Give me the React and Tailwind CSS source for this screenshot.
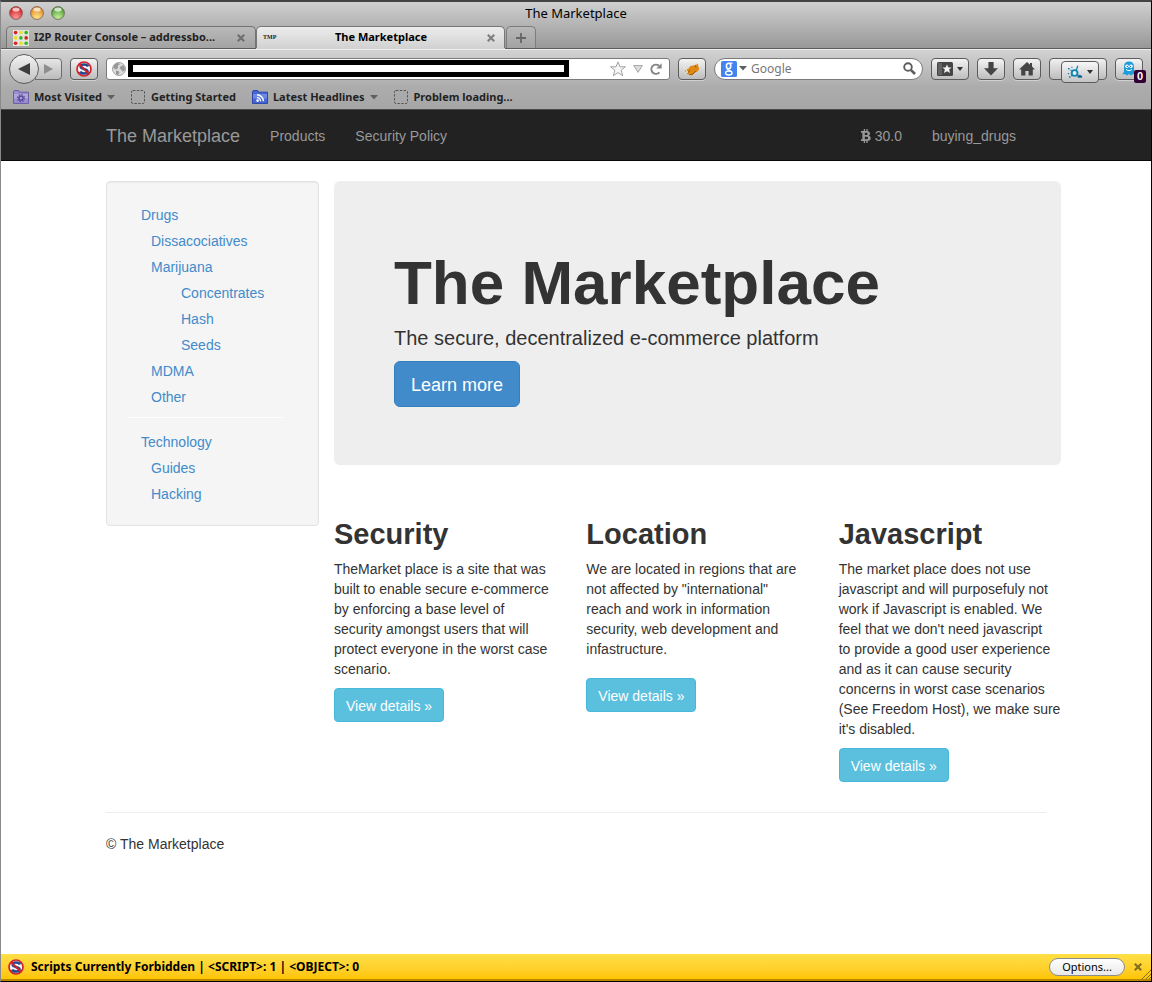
import React from "react";

const chromeFont = "font-['Noto_Sans','Open_Sans',sans-serif]";
const toolButton =
  "flex h-[22px] w-7 shrink-0 items-center justify-center rounded-[4px] border border-[#5c5c5c] bg-linear-to-b from-[#f4f4f4] to-[#bdbdbd] shadow-[0_1px_0_#d0d0d0]";

function TrafficLight({ id, label, light, dark }) {
  return (
    <button aria-label={label} className="size-[14px]">
      <svg viewBox="0 0 14 14" className="size-[14px]">
        <defs>
          <radialGradient id={id} cx="50%" cy="85%" r="75%">
            <stop offset="0" stopColor={light} />
            <stop offset="1" stopColor={dark} />
          </radialGradient>
        </defs>
        <circle cx="7" cy="7" r="6.4" fill={`url(#${id})`} stroke="#55403c" strokeOpacity=".65" strokeWidth=".9" />
        <ellipse cx="7" cy="3.6" rx="3.6" ry="2" fill="#fff" fillOpacity=".7" />
      </svg>
    </button>
  );
}

function CloseGlyph({ color = "#6f6f6f" }) {
  return (
    <svg viewBox="0 0 8 8" className="size-2">
      <path d="M.8.8l6.400 6.400M7.200.8L.8 7.200" stroke={color} strokeWidth="2.200" />
    </svg>
  );
}

function Caret({ color = "#5f5f5f", className = "" }) {
  return (
    <svg viewBox="0 0 8 5" className={`h-[5px] w-2 shrink-0 ${className}`}>
      <path d="M0 0h8L4 4.6z" fill={color} />
    </svg>
  );
}

const routerDots = [
  "#d42020", "#e8e020", "#28b828",
  "#e8e020", "#28b828", "#d42020",
  "#d42020", "#e8e020", "#28b828",
];

function RouterIcon() {
  return (
    <svg viewBox="0 0 16 16" className="size-4 shrink-0">
      <rect width="16" height="16" fill="#e4e4dc" />
      {routerDots.map((c, i) => (
        <circle key={i} cx={2.6 + (i % 3) * 5.3} cy={2.6 + Math.floor(i / 3) * 5.3} r="1.8" fill={c} />
      ))}
    </svg>
  );
}

function NoScriptIcon() {
  return (
    <svg viewBox="0 0 16 16" className="size-4 shrink-0">
      <circle cx="8" cy="8" r="7" fill="#f4f4f8" stroke="#d81f26" strokeWidth="1.7" />
      <path d="M12 5.400C11 3 4.600 2.800 4.600 5.700c0 2.700 7 1.800 7 4.700 0 2.800-6.400 2.600-7.600.2" fill="none" stroke="#24478f" strokeWidth="2.500" />
      <path d="M3.200 3.200l9.600 9.600" stroke="#d81f26" strokeWidth="1.900" />
    </svg>
  );
}

function GlobeIcon() {
  return (
    <svg viewBox="0 0 14 14" className="size-[14px] shrink-0">
      <circle cx="7" cy="7" r="6.5" fill="#dcdcdc" stroke="#a4a4a4" />
      <path d="M2 3.2C3 1.8 5 1 7 1l.6 1.6-2 1.2.6 1.8-2 1.8L1.3 6zM8.4 4.6l3-1.6 1.6 3-.6 3-2.2.4-1-2-1.6-.6zM4 8.6l2.8.6.6 1.8-1.4 2-2-.8z" fill="#989898" />
    </svg>
  );
}

function FolderIcon({ kind }) {
  const rss = kind === "rss";
  return (
    <svg viewBox="0 0 16 14" className="h-[14px] w-4 shrink-0">
      <path d="M.5 1.8L1.3.6h4.4l.9 1.6h8.9v11.2H.5z" fill={rss ? "#4468d8" : "#9a8ed0"} stroke={rss ? "#2b45a8" : "#6b5ca6"} />
      <path d="M1 4h14v4.5H1z" fill="#fff" fillOpacity=".22" />
      {rss ? (
        <g fill="none" stroke="#fff" strokeWidth="1.4">
          <path d="M5 7.6a3.6 3.6 0 0 1 3.6 3.6M5 4.8a6.4 6.4 0 0 1 6.4 6.4" />
          <circle cx="5.6" cy="10.6" r=".6" fill="#fff" />
        </g>
      ) : (
        <g fill="none" stroke="#5e4f9c">
          <circle cx="8" cy="8.2" r="2.1" strokeWidth="1.6" />
          <circle cx="8" cy="8.2" r="3.5" strokeWidth="1.3" strokeDasharray="1.4 1.35" />
        </g>
      )}
    </svg>
  );
}

function BlankPageIcon() {
  return (
    <svg viewBox="0 0 14 14" className="size-[14px] shrink-0">
      <rect x=".5" y=".5" width="13" height="13" rx="1.5" fill="none" stroke="#555" strokeDasharray="2.4 1.4" />
    </svg>
  );
}

function Titlebar() {
  return (
    <header className="border-b border-[#5d5d5d] bg-linear-to-b from-[#d0d0d0] to-[#989898]">
      <div className="grid h-6 grid-cols-[1fr_auto_1fr] items-center px-2">
        <div className="flex gap-[7px] pb-[2px]">
          <TrafficLight id="lr" label="Close" light="#ff9a98" dark="#d21f22" />
          <TrafficLight id="ly" label="Minimize" light="#ffe58a" dark="#e08a24" />
          <TrafficLight id="lg" label="Zoom" light="#c6f09a" dark="#4f9b38" />
        </div>
        <div className="text-[13px] text-black">The Marketplace</div>
      </div>
      <div className="flex h-[22px] pl-[5px] text-[11px] font-bold">
        <div className="flex w-[250px] items-center gap-1 rounded-t-[5px] border border-b-0 border-[#737373] bg-linear-to-b from-[#b9b9b9] to-[#a3a3a3] pr-[10px] pl-[6px]">
          <RouterIcon />
          <span className="ml-px flex-1 truncate text-[#222]">I2P Router Console – addressbo...</span>
          <button aria-label="Close tab"><CloseGlyph /></button>
        </div>
        <div className="flex w-[249px] items-center rounded-t-[5px] border border-b-0 border-[#777] bg-linear-to-b from-[#ececec] to-[#d2d2d2] pr-[9px] pl-[6px] shadow-[0_1px_0_#d2d2d2]">
          <span className="w-4 font-['Liberation_Serif',serif] text-[6px] text-[#222]">TMP</span>
          <span className="flex-1 pr-1 text-center text-black">The Marketplace</span>
          <button aria-label="Close tab"><CloseGlyph color="#808080" /></button>
        </div>
        <button aria-label="New tab" className="ml-px flex w-[30px] items-center justify-center rounded-t-[5px] border border-b-0 border-[#7c7c7c] bg-linear-to-b from-[#b8b8b8] to-[#a2a2a2]">
          <svg viewBox="0 0 10 10" className="size-[10px]"><path d="M5 0v10M0 5h10" stroke="#666" strokeWidth="1.8" /></svg>
        </button>
      </div>
    </header>
  );
}

function NavigationBar() {
  return (
    <div className="flex h-[38px] items-center gap-2 border-t border-[#ececec] bg-linear-to-b from-[#d2d2d2] to-[#acacac] px-2">
      <div className="flex items-center">
        <button aria-label="Back" className="z-10 flex size-[30px] items-center justify-center rounded-full border border-[#5c5c5c] bg-linear-to-b from-[#f2f2f2] to-[#c0c0c0]">
          <svg viewBox="0 0 12 12" className="size-3"><path d="M12 0v12L0 6z" fill="#3d3d3d" /></svg>
        </button>
        <button aria-label="Forward" className="-ml-1 flex h-[22px] w-[27px] items-center justify-center rounded-r-[4px] border border-[#6c6c6c] bg-linear-to-b from-[#e6e6e6] to-[#bcbcbc]">
          <svg viewBox="0 0 9 10" className="h-[10px] w-[9px]"><path d="M0 0v10l9-5z" fill="#8e8e8e" /></svg>
        </button>
      </div>
      <button aria-label="NoScript" className={toolButton}><NoScriptIcon /></button>
      <div className="flex h-[22px] flex-1 items-center rounded-[3px] border border-[#7b7b7b] bg-white pr-[7px] pl-[5px]">
        <GlobeIcon />
        <input aria-label="Address" className="ml-0.5 h-[17px] w-[441px] min-w-0 border-[5px] border-black bg-white" />
        <div className="ml-auto flex items-center gap-[7px]">
          <svg viewBox="0 0 16 16" className="size-4"><path d="M8 .8l2 5h5.4l-4.2 3.4 1.5 5.6L8 11.6l-4.7 3.2 1.5-5.6L.6 5.8H6z" fill="#f6f6f6" stroke="#a2a2a2" /></svg>
          <svg viewBox="0 0 10 8" className="h-2 w-[10px]"><path d="M.6.5h8.8L5 7.4z" fill="#dcdcdc" stroke="#a8a8a8" /></svg>
          <button aria-label="Reload">
            <svg viewBox="0 0 12 12" className="size-3"><path d="M9.4 9.3A4.6 4.6 0 1 1 9 2.8" fill="none" stroke="#848484" strokeWidth="2" /><path d="M11.6.2v5.4H6.2z" fill="#848484" /></svg>
          </button>
        </div>
      </div>
      <button aria-label="FoxyProxy" className={toolButton}>
        <svg viewBox="0 0 16 14" className="h-[14px] w-4">
          <path d="M1 7.4L4 7l2.600-3 4.400-.8L13 1.400l1.400-.8-.2 3.400 1 3-1.600 2.600-3.200 1.400-1.800 2-4.600-.4L1.600 10z" fill="#e08a14" />
          <path d="M.6 5.600l3 4.600-2.200.2M12.400 2.400L15 .4l.4 3.600" stroke="#f6f0e4" fill="none" />
          <path d="M4 10.400l2.200-2M9 12l2.600-3M5.600 12.600h3M11 3.400l1 2" stroke="#8e5010" fill="none" />
        </svg>
      </button>
      <div className="flex h-[22px] w-[209px] items-center rounded-full border border-[#7b7b7b] bg-white px-[6px]">
        <svg viewBox="0 0 16 16" className="size-4 shrink-0">
          <rect width="16" height="16" rx="1.500" fill="#4484ee" />
          <g fill="none" stroke="#fff">
            <ellipse cx="7.600" cy="5" rx="2.200" ry="2.700" strokeWidth="1.600" />
            <ellipse cx="7.800" cy="12" rx="3.200" ry="2" strokeWidth="1.400" />
            <path d="M8.600 2.200h3M6.800 7.600c-1.600 1.200 2 1.400 3 2.800" strokeWidth="1.300" />
          </g>
        </svg>
        <Caret className="ml-[2px]" />
        <input aria-label="Search" placeholder="Google" className="ml-1 w-0 flex-1 bg-transparent text-[12px] placeholder:text-[#777]" />
        <svg viewBox="0 0 13 13" className="size-[13px] shrink-0"><circle cx="5" cy="5" r="3.8" fill="none" stroke="#5c5c5c" strokeWidth="1.9" /><path d="M7.8 7.8l4.2 4.2" stroke="#5c5c5c" strokeWidth="2.6" /></svg>
      </div>
      <button aria-label="Bookmarks" className="flex h-[22px] w-[38px] shrink-0 items-center justify-center gap-1 rounded-[4px] border border-[#5c5c5c] bg-linear-to-b from-[#f4f4f4] to-[#bdbdbd]">
        <svg viewBox="0 0 16 14" className="h-[14px] w-4">
          <rect width="16" height="14" rx="1.5" fill="#454545" /><path d="M2 1v12M4 1v12" stroke="#808080" />
          <path d="M10 2.4l1.4 3h3.2l-2.5 2.2 1 3.4L10 9.2 6.9 11l1-3.4-2.5-2.2h3.2z" fill="#f4f4f4" />
        </svg>
        <svg viewBox="0 0 6 4" className="h-1 w-[6px]"><path d="M0 0h6L3 4z" fill="#333" /></svg>
      </button>
      <button aria-label="Downloads" className={toolButton}>
        <svg viewBox="0 0 14 14" className="size-[14px]"><path d="M4.4 0h5.2v6.2H14L7 13.6 0 6.2h4.4z" fill="#444" /></svg>
      </button>
      <button aria-label="Home" className={toolButton}>
        <svg viewBox="0 0 16 14" className="h-[14px] w-4"><path d="M8 0l3 2.800V1h2v3.600l3 2.800h-2.2v6.200H9.600V9H6.400v4.600H2.200V7.400H0z" fill="#444" /></svg>
      </button>
      <div className="relative h-[22px] w-[58px] shrink-0 rounded-[4px] border border-[#5c5c5c] bg-linear-to-b from-[#f0f0f0] to-[#bdbdbd]">
        <button aria-label="Identity" className="absolute top-[2px] left-[11px] flex h-[22px] w-[38px] items-center justify-center gap-1 rounded-[4px] border border-[#5c5c5c] bg-linear-to-b from-[#f8f8f8] to-[#c4c4c4]">
          <svg viewBox="0 0 16 14" className="h-[14px] w-4">
            <circle cx="7.600" cy="8" r="2.900" fill="#e4f2f8" stroke="#1583b0" strokeWidth="1.900" />
            <path d="M9.200 5.400L10.800.8" stroke="#1583b0" strokeWidth="1.300" />
            <path d="M1 3.800h1.600M3.400 5.400h1.200M.8 8.600h1.400M2 12h1.600M4 10.600h1M4.400 2.400h1" stroke="#1583b0" strokeWidth="1.400" />
            <path d="M10.400 10.600l2.600-.8 2.400 1.400-.6 1.600h-4z" fill="#0f6a94" />
          </svg>
          <svg viewBox="0 0 6 4" className="h-1 w-[6px]"><path d="M0 0h6L3 4z" fill="#333" /></svg>
        </button>
      </div>
      <button aria-label="Ghostery" className={`relative ${toolButton}`}>
        <svg viewBox="0 0 14 15" className="h-[15px] w-[14px]">
          <path d="M2 6C2 2.4 4 .6 7 .6S12 2.4 12 6v4.6l1.6 3-2.6-.6-2 1.4-2-1.4-2 1.4-2-1.4-2.6.6L2 10.6z" fill="#1c9cdc" />
          <circle cx="5" cy="5.2" r="1.7" fill="#fff" /><circle cx="9" cy="5.2" r="1.7" fill="#fff" />
          <circle cx="5.300" cy="5.400" r=".6" fill="#124e78" /><circle cx="8.700" cy="5.400" r=".6" fill="#124e78" />
          <path d="M4 8.4c1.6 1.6 4.4 1.6 6 0" stroke="#fff" fill="none" />
        </svg>
        <span className="absolute top-[11px] left-[18px] flex h-[13px] w-3 items-center justify-center rounded-[2px] bg-[#330033] font-['Liberation_Sans',sans-serif] text-[11px] font-bold text-white">0</span>
      </button>
    </div>
  );
}

function BookmarksBar() {
  return (
    <nav aria-label="Bookmarks" className="flex h-[23px] items-center border-b border-[#4a4a4a] bg-linear-to-b from-[#acacac] to-[#a6a6a6] pb-[2px] pl-3 text-[11px] font-bold text-[#222]">
      <a href="#visited" className="flex items-center gap-[5px]"><FolderIcon kind="gear" />Most Visited<Caret /></a>
      <a href="#start" className="ml-4 flex items-center gap-[6px]"><BlankPageIcon />Getting Started</a>
      <a href="#headlines" className="ml-4 flex items-center gap-[5px]"><FolderIcon kind="rss" />Latest Headlines<Caret /></a>
      <a href="#loading" className="ml-4 flex items-center gap-[6px]"><BlankPageIcon />Problem loading...</a>
    </nav>
  );
}

function SiteNav() {
  return (
    <nav className="border-b border-[#080808] bg-[#222] text-[14px] text-[#999]">
      <div className="mx-auto flex h-[50px] max-w-[970px] items-center gap-[30px] pt-[2px] pr-[45px] pl-[15px]">
        <a href="#home" className="text-[18px]">The Marketplace</a>
        <a href="#products">Products</a>
        <a href="#policy">Security Policy</a>
        <a href="#wallet" className="ml-auto flex items-center gap-1">
          <svg viewBox="0 0 10 14" className="h-[14px] w-[10px]">
            <path d="M0 2h5.6C8 2 9 3.1 9 4.6c0 1-.5 1.8-1.4 2.1C8.9 7 9.7 7.9 9.7 9.2 9.7 11 8.3 12 6 12H0v-1.8h1.4V3.8H0zM3.8 3.8v2.2h1.4c.9 0 1.4-.4 1.4-1.1s-.5-1.1-1.400-1.100zM3.8 7.7v2.500h1.700c1 0 1.600-.5 1.600-1.300s-.6-1.200-1.600-1.200z" fill="#999" fillRule="evenodd" />
            <path d="M3.4 0v2.4M6 0v2.4M3.4 11.6V14M6 11.6V14" stroke="#999" strokeWidth="1.3" />
          </svg>
          30.0
        </a>
        <a href="#account">buying_drugs</a>
      </div>
    </nav>
  );
}

const drugs = [
  ["Drugs", "pl-[14px]"],
  ["Dissacociatives", "pl-6"],
  ["Marijuana", "pl-6"],
  ["Concentrates", "pl-[54px]"],
  ["Hash", "pl-[54px]"],
  ["Seeds", "pl-[54px]"],
  ["MDMA", "pl-6"],
  ["Other", "pl-6"],
];
const technology = [
  ["Technology", "pl-[14px]"],
  ["Guides", "pl-6"],
  ["Hacking", "pl-6"],
];

function LinkList({ items }) {
  return (
    <ul>
      {items.map(([name, indent]) => (
        <li key={name} className={`leading-[26px] ${indent}`}>
          <a href={`#${name}`} className="text-[#428bca]">{name}</a>
        </li>
      ))}
    </ul>
  );
}

function Feature({ title, children, spaced }) {
  return (
    <section>
      <h2 className="mb-2 text-[29px] leading-[34px] font-bold">{title}</h2>
      <p className={spaced ? "pr-3" : ""}>{children}</p>
      <a href={`#${title}`} className={`inline-block rounded-[4px] border border-[#46b8da] bg-[#5bc0de] px-[11px] pt-[7px] pb-[5px] text-white ${spaced ? "mt-[19px]" : "mt-[9px]"}`}>
        View details »
      </a>
    </section>
  );
}

function StatusBar() {
  return (
    <footer className="flex h-[27px] items-center border-b-2 border-[#b98600] bg-linear-to-b from-[#ffe046] to-[#ffc400] pl-[7px] text-[11px] text-black">
      <NoScriptIcon />
      <span className="ml-[7px] text-[12px] font-bold">Scripts Currently Forbidden | &lt;SCRIPT&gt;: 1 | &lt;OBJECT&gt;: 0</span>
      <button className="ml-auto h-[18px] w-[76px] rounded-full border border-[#8c8c8c] bg-linear-to-b from-white to-[#e8e8e8] leading-4">Options...</button>
      <button aria-label="Dismiss" className="ml-[9px]"><CloseGlyph color="#80701c" /></button>
      <svg viewBox="0 0 9 10" className="mt-auto h-[10px] w-[9px]"><path d="M0 10L9 1M4 10l5-5M7 10l2-2" stroke="#80701c" /></svg>
    </footer>
  );
}

export default function App() {
  return (
    <div className={`flex min-h-screen flex-col border-t-2 border-r border-b border-l border-t-[#444] border-r-black border-b-black border-l-[#8a8a8a] bg-white ${chromeFont}`}>
      <Titlebar />
      <NavigationBar />
      <BookmarksBar />
      <div className="flex-1 font-['Liberation_Sans',Arial,sans-serif] text-[14px] leading-5 text-[#333]">
        <SiteNav />
        <div className="mx-auto max-w-[970px] pt-5 pl-[15px]">
          <div className="flex items-start gap-[15px]">
            <aside className="w-[213px] shrink-0 rounded-[4px] border border-[#e3e3e3] bg-[#f5f5f5] px-5 pt-5 pb-[18px] shadow-[inset_0_1px_1px_rgba(0,0,0,0.05)]">
              <LinkList items={drugs} />
              <hr className="mt-[7px] mr-[15px] mb-[11px] border-white" />
              <LinkList items={technology} />
            </aside>
            <main className="min-w-0 flex-1">
              <div className="rounded-[6px] bg-[#eee] px-[60px] pt-[70px] pb-[58px]">
                <h1 className="text-[62px] leading-[64px] font-bold">The Marketplace</h1>
                <p className="mt-2 mb-2 text-[20px] leading-[30px]">The secure, decentralized e-commerce platform</p>
                <a href="#learn" className="inline-block rounded-[6px] border border-[#357ebd] bg-[#428bca] px-4 pt-[11px] pb-[9px] text-[18px] leading-6 text-white">Learn more</a>
              </div>
              <div className="mt-[52px] grid grid-cols-3 gap-[30px]">
                <Feature title="Security">
                  TheMarket place is a site that was built to enable secure e-commerce by enforcing a base level of security amongst users that will protect everyone in the worst case scenario.
                </Feature>
                <Feature title="Location" spaced>
                  We are located in regions that are not affected by "international" reach and work in information security, web development and infastructure.
                </Feature>
                <Feature title="Javascript">
                  The market place does not use javascript and will purposefuly not work if Javascript is enabled. We feel that we don't need javascript
                  <br />
                  to provide a good user experience and as it can cause security concerns in worst case scenarios (See Freedom Host), we make sure it's disabled.
                </Feature>
              </div>
            </main>
          </div>
          <hr className="mt-[30px] mr-[15px] mb-[21px] border-[#eee]" />
          <p>© The Marketplace</p>
        </div>
      </div>
      <StatusBar />
    </div>
  );
}
